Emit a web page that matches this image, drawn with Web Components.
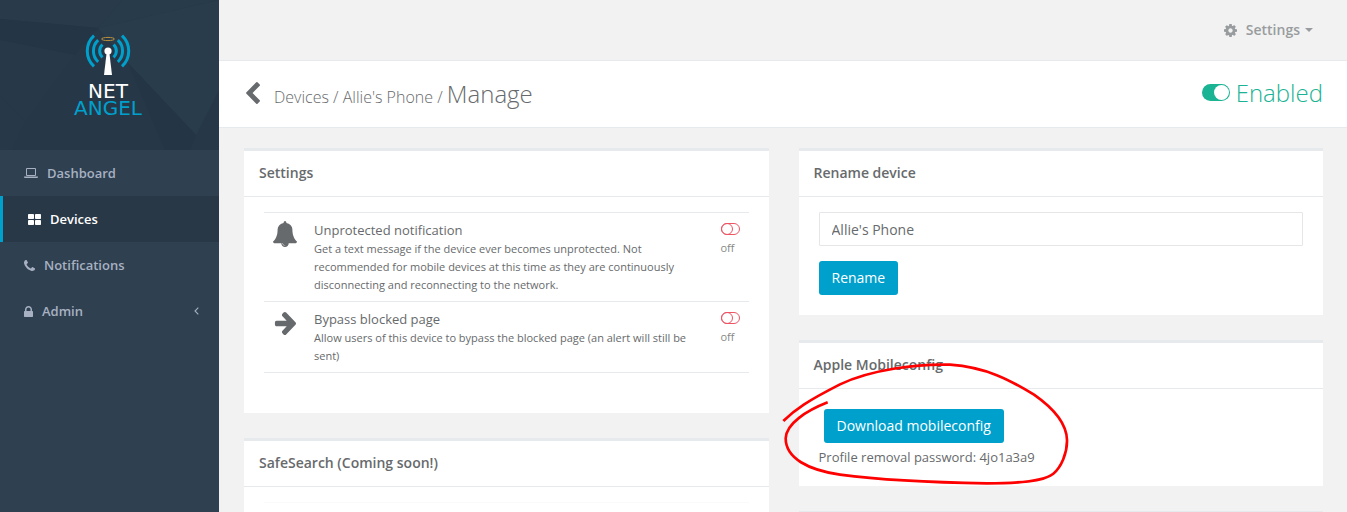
<!DOCTYPE html>
<html lang="en">
<head>
<meta charset="utf-8">
<meta name="viewport" content="width=device-width, initial-scale=1">
<title>Net Angel - Manage device</title>
<style>
  html, body { margin: 0; }
  body {
    font: 13px/18px "Open Sans", "Noto Sans", sans-serif;
    color: #676a6c;
    background: #2f4050;
    --line: #e7eaec;
    --accent: #00a0cc;
    --on: #1ab394;
    --off: #ed5565;
  }
</style>
</head>
<body>
<app-shell>
  <side-nav slot="nav">
    <nav-item icon="laptop">Dashboard</nav-item>
    <nav-item icon="grid" active>Devices</nav-item>
    <nav-item icon="phone">Notifications</nav-item>
    <nav-item icon="lock" more>Admin</nav-item>
  </side-nav>
  <top-bar></top-bar>
  <page-heading></page-heading>
  <panel-grid>
    <panel-column>
      <panel-card heading="Settings">
        <setting-list>
          <setting-row icon="bell" heading="Unprotected notification">Get a text message if the device ever becomes unprotected. Not recommended for mobile devices at this time as they are continuously disconnecting and reconnecting to the network.</setting-row>
          <setting-row icon="arrow" heading="Bypass blocked page">Allow users of this device to bypass the blocked page (an alert will still be sent)</setting-row>
        </setting-list>
      </panel-card>
      <panel-card heading="SafeSearch (Coming soon!)">
        <setting-list faded></setting-list>
      </panel-card>
    </panel-column>
    <panel-column>
      <panel-card heading="Rename device"><rename-form></rename-form></panel-card>
      <panel-card heading="Apple Mobileconfig">
        <mobile-config></mobile-config>
        <hand-circle slot="overlay"></hand-circle>
      </panel-card>
      <panel-card></panel-card>
    </panel-column>
  </panel-grid>
</app-shell>

<script>
const define = (name, html, setup) => {
  const template = document.createElement('template');
  customElements.define(name, class extends HTMLElement {
    constructor() {
      super();
      this.attachShadow({ mode: 'open' });
    }
    connectedCallback() {
      if (this.shadowRoot.childNodes.length) return;
      template.innerHTML = html;
      this.shadowRoot.append(template.content.cloneNode(true));
      if (setup) setup(this, this.shadowRoot);
    }
  });
};

/* name: [width, height, viewBox, markup] */
const ICONS = {
  laptop: [14, 10, '0 0 14 10', '<path fill-rule="evenodd" d="M3 0h8q1 0 1 1v6q0 1-1 1H3Q2 8 2 7V1q0-1 1-1zm0 1v6h8V1z"/><path d="M0 8.4h14v.6q0 1-1 1H1Q0 10 0 9z"/>'],
  grid: [13, 11, '0 0 13 11', '<rect width="6" height="5" rx=".8"/><rect x="7" width="6" height="5" rx=".8"/><rect y="6" width="6" height="5" rx=".8"/><rect x="7" y="6" width="6" height="5" rx=".8"/>'],
  phone: [11, 11, '192 128 1408 1408', '<path d="M1600 1240q0 27-10 70.5t-21 68.5q-21 50-122 106-94 51-186 51-27 0-53-3.5t-57.5-12.5-47-14.5-55.5-20.5-49-18q-98-35-175-83-127-79-264-216t-216-264q-48-77-83-175-3-9-18-49t-20.5-55.5-14.5-47-12.5-57.5-3.5-53q0-92 51-186 56-101 106-122 25-11 68.5-21t70.5-10q14 0 21 3 18 6 53 76 11 19 30 54t35 63.5 31 53.5q3 4 17.5 25t21.5 35.5 7 28.5q0 20-28.5 50t-62 55-62 53-28.5 46q0 9 5 22.5t8.5 20.5 14 24 11.5 19q76 137 174 235t235 174q2 1 19 11.5t24 14 20.5 8.5 22.5 5q18 0 46-28.5t53-62 55-62 50-28.5q14 0 28.5 7t35.5 21.5 25 17.5q25 15 53.5 31t63.5 35 54 30q70 35 76 53 3 7 3 21z"/>'],
  lock: [9, 11, '320 128 1152 1408', '<path d="M640 768h512v-192q0-106-75-181t-181-75-181 75-75 181v192zm832 96v576q0 40-28 68t-68 28h-960q-40 0-68-28t-28-68v-576q0-40 28-68t68-28h32v-192q0-184 132-316t316-132 316 132 132 316v192h32q40 0 68 28t28 68z"/>'],
  angle: [5, 8, '0 0 5 8', '<path d="M4.3.6 1 4l3.300 3.400" fill="none" stroke="currentColor" stroke-width="1.1"/>'],
  gear: [13, 13, '128 128 1536 1536', '<path d="M1152 896q0-106-75-181t-181-75-181 75-75 181 75 181 181 75 181-75 75-181zm512-109v222q0 12-8 23t-20 13l-185 28q-19 54-39 91 35 50 107 138 10 12 10 25t-9 23q-27 37-99 108t-94 71q-12 0-26-9l-138-108q-44 23-91 38-16 136-29 186-7 28-36 28h-222q-14 0-24.5-8.5t-11.5-21.5l-28-184q-49-16-90-37l-141 107q-10 9-25 9-14 0-25-11-126-114-165-168-7-10-7-23 0-12 8-23 15-21 51-66.5t54-70.5q-27-50-41-99l-183-27q-13-2-21-12.5t-8-23.5v-222q0-12 8-23t19-13l186-28q14-46 39-92-40-57-107-138-10-12-10-24 0-10 9-23 26-36 98.5-107.5t94.5-71.5q13 0 26 10l138 107q44-23 91-38 16-136 29-186 7-28 36-28h222q14 0 24.5 8.5t11.500 21.500l28 184q49 16 90 37l142-107q9-9 24-9 13 0 25 10 129 119 165 170 7 8 7 22 0 12-8 23-15 21-51 66.500t-54 70.500q26 50 41 98l183 28q13 2 21 12.500t8 23.500z"/>'],
  caret: [8, 4, '0 0 8 4', '<path d="M0 0h8L4 4z"/>'],
  back: [14, 22, '410 26 1036 1612', '<path d="M1427 301l-531 531 531 531q19 19 19 45t-19 45l-166 166q-19 19-45 19t-45-19l-742-742q-19-19-19-45t19-45l742-742q19-19 45-19t45 19l166 166q19 19 19 45t-19 45z"/>'],
  bell: [24, 26, '64 0 1664 1792', '<path d="M912 1696q0-16-16-16-59 0-101.500-42.500t-42.500-101.500q0-16-16-16t-16 16q0 73 51.500 124.500t124.500 51.500q16 0 16-16zm816-288q0 52-38 90t-90 38h-448q0 106-75 181t-181 75-181-75-75-181h-448q-52 0-90-38t-38-90q50-42 91-88t85-119.500 74.500-158.500 50-206 19.500-260q0-152 117-282.500t307-158.500q-8-19-8-39 0-40 28-68t68-28 68 28 28 68q0 20-8 39 190 28 307 158.500t117 282.500q0 139 19.500 260t50 206 74.500 158.500 85 119.500 91 88z"/>'],
  arrow: [22, 23, '64 179 1536 1560', '<path d="M1600 960q0 54-37 91l-651 651q-39 37-91 37-51 0-90-37l-75-75q-38-38-38-91t38-91l293-293h-704q-52 0-84.500-37.500t-32.500-90.500v-128q0-53 32.500-90.500t84.500-37.500h704l-293-294q-38-36-38-90t38-90l75-75q38-38 90-38 53 0 91 38l651 651q37 35 37 90z"/>']
};
define('app-icon', '<style>:host{display:inline-flex;flex:none} svg{display:block;fill:currentColor}</style>', (host, root) => {
  const [w, h, box, body] = ICONS[host.getAttribute('name')];
  root.innerHTML += `<svg width="${w}" height="${h}" viewBox="${box}" preserveAspectRatio="none" aria-hidden="true">${body}</svg>`;
});

define('app-shell', `
<style>
  :host { display: grid; grid-template-columns: 219px minmax(0, 1fr); height: 100vh; overflow: hidden; }
  main { background: #f2f2f2; overflow: hidden; }
</style>
<slot name="nav"></slot>
<main><slot></slot></main>`);

define('brand-logo', `
<style>
  :host { display: grid; height: 150px; background: #263848; }
  .facets, .brand { grid-area: 1 / 1; }
  .facets { display: block; width: 100%; height: 150px; }
  .brand { display: flex; flex-direction: column; align-items: center; padding: 33px 3px 0 0; z-index: 1; }
  .brand svg { display: block; margin-bottom: 6px; }
  .name { font: 20px/17px "DejaVu Sans", sans-serif; text-align: center; color: #fff; }
  .angel { color: var(--accent); }
</style>
<svg class="facets" viewBox="0 0 219 150" preserveAspectRatio="none" aria-hidden="true">
  <path fill="#293b4a" d="M0 0H122L98 28 0 19z"/>
  <path fill="#283b4a" d="M122 0H219V0L98 28z"/>
  <path fill="#293c4b" d="M219 0V90L196 135 128 63 98 28z"/>
  <path fill="#243545" d="M0 19 98 28 75 55 0 40z"/>
  <path fill="#273949" d="M0 40 75 55 25 122 0 95z"/>
  <path fill="#243545" d="M128 63 196 135 190 150H165z"/>
  <path fill="#273949" d="M0 95 25 122 12 150H0z"/>
</svg>
<div class="brand">
  <svg width="48" height="44" viewBox="0 0 48 44" aria-hidden="true">
    <g fill="none" stroke="#00a0cc" stroke-width="3">
      <path d="M10 2.600A21 21 0 0 0 10 33.400M38 2.600A21 21 0 0 1 38 33.400"/>
      <path d="M14.200 7.200A14.600 14.600 0 0 0 14.200 28.800M33.800 7.200A14.600 14.600 0 0 1 33.800 28.800"/>
      <path d="M18.500 11.700A8.400 8.400 0 0 0 18.500 24.300M29.500 11.700A8.400 8.400 0 0 1 29.500 24.300"/>
    </g>
    <ellipse cx="24" cy="6" rx="6.500" ry="1.600" fill="none" stroke="#b98f3c"/>
    <circle cx="24" cy="18" r="3.600" fill="#fff"/>
    <path fill="#fff" d="M22.600 20h2.800L28 42h-8z"/>
  </svg>
  <div class="name">NET<br><span class="angel">ANGEL</span></div>
</div>`);

define('side-nav', `
<style>:host { display: block; background: #2f4050; } nav { display: flex; flex-direction: column; }</style>
<brand-logo></brand-logo>
<nav aria-label="Main"><slot></slot></nav>`);

define('nav-item', `
<style>
  :host { display: block; }
  a { display: flex; align-items: center; gap: 9px; padding: 14px 20px 14px 24px; color: #a7b1c2;
    font-weight: 600; text-decoration: none; }
  :host([active]) a { background: #293846; color: #fff; border-left: 3px solid var(--accent); padding-left: 25px; }
  .more { margin-left: auto; }
</style>
<a href="#"></a>`, (host, root) => {
  root.querySelector('a').innerHTML =
    `<app-icon name="${host.getAttribute('icon')}"></app-icon><span><slot></slot></span>` +
    (host.hasAttribute('more') ? '<app-icon class="more" name="angle"></app-icon>' : '');
});

define('top-bar', `
<style>
  :host { display: flex; justify-content: flex-end; align-items: center; height: 60px; padding-right: 34px;
    border-bottom: 1px solid var(--line); }
  button { display: flex; align-items: center; padding: 0; border: 0; background: none; color: #999c9e;
    font: 600 14px/20px "Open Sans", sans-serif; }
  span { margin: 0 5px 0 9px; }
</style>
<button type="button" aria-haspopup="true"><app-icon name="gear"></app-icon><span>Settings</span><app-icon name="caret"></app-icon></button>`);

define('toggle-switch', `
<style>
  :host { display: inline-flex; }
  input { appearance: none; display: flex; box-sizing: border-box; margin: 0; width: 19px; height: 12px;
    border: 1px solid var(--off); border-radius: 9px; }
  input::before { content: ""; box-sizing: border-box; width: 12px; height: 12px; margin: -1px;
    border: 1px solid var(--off); border-radius: 50%; }
  input:checked { width: 28px; height: 17px; border: 0; background: var(--on); justify-content: flex-end; padding: 1px; }
  input:checked::before { width: 15px; height: 15px; margin: 0; border: 0; background: #fff; }
</style>
<input type="checkbox" role="switch">`, (host, root) => {
  const input = root.querySelector('input');
  input.checked = host.hasAttribute('checked');
  input.setAttribute('aria-label', host.getAttribute('label'));
});

define('page-heading', `
<style>
  :host { display: flex; align-items: center; justify-content: space-between; height: 66px; padding: 0 24px 0 27px;
    background: #fff; border-bottom: 1px solid var(--line); }
  div { display: flex; align-items: center; }
  .trail { gap: 14px; padding-top: 2px; }
  .state { gap: 6px; padding-bottom: 3px; color: var(--on); }
  a { color: inherit; text-decoration: none; }
  h1, .state span { margin: 0; font-size: 24px; line-height: 28px; font-weight: 300; }
  small { font-size: 16px; }
</style>
<div class="trail"><a href="#" aria-label="Back"><app-icon name="back"></app-icon></a>
<h1><small><a href="#">Devices</a> / <a href="#">Allie's Phone</a> / </small>Manage</h1></div>
<div class="state"><toggle-switch checked label="Enabled"></toggle-switch><span>Enabled</span></div>`);

define('panel-grid', `
<style>:host { display: grid; grid-template-columns: repeat(2, minmax(0, 1fr)); gap: 30px; align-items: start; padding: 20px 24px 0 25px; }</style>
<slot></slot>`);
define('panel-column', `<style>:host { display: grid; gap: 25px; }</style><slot></slot>`);

define('panel-card', `
<style>
  :host { display: block; position: relative; background: #fff; border-top: 3px solid var(--line); }
  h2 { margin: 0; padding: 12px 15px 13px; font-size: 14px; line-height: 20px; font-weight: 600;
    border-bottom: 1px solid var(--line); }
  .body { padding: 15px 20px 20px; }
</style>
<h2></h2><div class="body"><slot></slot></div><slot name="overlay"></slot>`, (host, root) => {
  root.querySelector('h2').textContent = host.getAttribute('heading');
});

define('setting-list', `
<style>
  :host { display: block; margin-bottom: 20px; border-bottom: 1px solid var(--line); }
  :host([faded]) { border-color: #f9fafa; }
</style><slot></slot>`);

define('setting-row', `
<style>
  :host { display: grid; grid-template-columns: 26px minmax(0, 1fr) 20px; column-gap: 16px; padding: 8px 8px 7px;
    border-top: 1px solid var(--line); }
  .icon { display: flex; justify-content: center; align-items: center; height: 26px; }
  h3, p { margin: 0; font-weight: 400; font-size: 13px; line-height: 18px; }
  p, .state span { font-size: 11px; }
  p { padding-top: 1px; }
  .state { display: flex; flex-direction: column; align-items: flex-start; }
  toggle-switch { padding: 2px 0 4px; }
  .state span { color: #888; }
</style>
<div class="icon"></div>
<div><h3></h3><p><slot></slot></p></div>
<div class="state"></div>`, (host, root) => {
  const heading = host.getAttribute('heading');
  root.querySelector('.icon').innerHTML = `<app-icon name="${host.getAttribute('icon')}"></app-icon>`;
  root.querySelector('h3').textContent = heading;
  root.querySelector('.state').innerHTML = `<toggle-switch label="${heading}"></toggle-switch><span>off</span>`;
});

const BUTTON = `
  button { height: 34px; padding: 0 13px; border: 0; border-radius: 3px; background: var(--accent); color: #fff;
    font: 500 14px/20px "Open Sans", sans-serif; }`;

define('rename-form', `
<style>
  :host { display: block; }
  form { display: grid; gap: 15px; justify-items: start; }
  input { box-sizing: border-box; width: 100%; height: 34px; padding: 0 12px; border: 1px solid #e5e6e7; border-radius: 1px;
    font: 14px/20px "Open Sans", sans-serif; color: inherit; background: #fff; }
  ${BUTTON}
</style>
<form><input type="text" aria-label="Device name" value="Allie's Phone"><button type="button">Rename</button></form>`);

define('mobile-config', `
<style>
  :host { display: block; }
  ${BUTTON}
  button { display: block; margin: 0 5px 5px; }
  p { margin: 0; }
  :host { padding-top: 5px; }
</style>
<button type="button">Download mobileconfig</button>
<p>Profile removal password: 4jo1a3a9</p>`);

define('hand-circle', `
<style>
  :host { position: absolute; left: -19px; top: -13px; pointer-events: none; }
  svg { display: block; width: 300px; height: 182px; }
</style>
<svg viewBox="0 0 900 546" fill="none" stroke="#fe0000" stroke-width="8" aria-hidden="true">
  <path d="M10 273C45 238 82 213 180 163C275 118 415 101 510 104C620 112 690 150 762 194C825 238 860 285 861 330C862 370 843 412 820 431C790 455 715 460 620 460C480 458 300 450 180 434C85 420 17 385 17 325C19 280 80 242 143 217"/>
</svg>`);
</script>
</body>
</html>
